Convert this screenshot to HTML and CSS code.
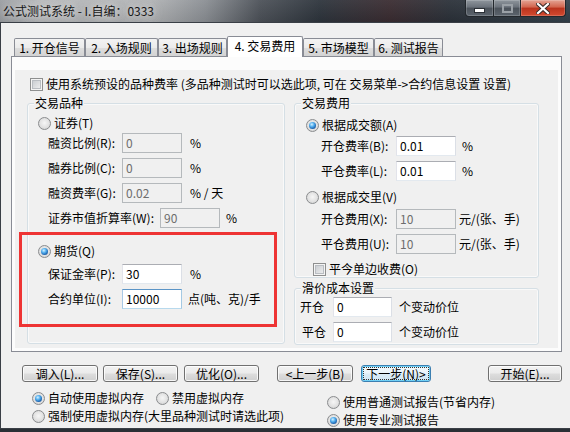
FILE: index.html
```html
<!DOCTYPE html>
<html lang="zh-CN">
<head>
<meta charset="utf-8">
<title>公式测试系统</title>
<link rel="stylesheet" href="styles.css">
</head>
<body>
<div class="window">
  <div class="titlebar">
    <div class="title">公式测试系统 - I.自编：0333</div>
    <div class="caption-btns">
      <div class="cbtn cmin"><svg width="11" height="5" viewBox="0 0 11 5"><rect x="0.5" y="0.5" width="10" height="4" fill="#fff" stroke="#2a2f35"/></svg></div>
      <div class="cbtn cmax"><svg width="11" height="9" viewBox="0 0 11 9"><rect x="1" y="1" width="9" height="7" fill="none" stroke="#9aa0a6" stroke-width="2"/></svg></div>
      <div class="cbtn cclose"><svg width="14" height="11" viewBox="0 0 14 11"><path d="M2 1 L12 10 M12 1 L2 10" stroke="#3a2a28" stroke-width="4.2" stroke-linecap="square"/><path d="M2 1 L12 10 M12 1 L2 10" stroke="#fff" stroke-width="2.2" stroke-linecap="square"/></svg></div>
    </div>
  </div>
  <div class="mid">
    <div class="frame-l"></div>
    <div class="client">
      <div class="tabstrip">
        <div class="tab t1">1. 开仓信号</div>
        <div class="tab t2">2. 入场规则</div>
        <div class="tab t3">3. 出场规则</div>
        <div class="tab t4 sel">4. 交易费用</div>
        <div class="tab t5">5. 市场模型</div>
        <div class="tab t6">6. 测试报告</div>
      </div>
      <div class="panel">
        <div class="page">
          <div class="check-row"><span class="chk"></span><span>使用系统预设的品种费率 (多品种测试时可以选此项, 可在 交易菜单-&gt;合约信息设置 设置)</span></div>
          <div class="groups">
            <div class="group g-left">
              <span class="legend">交易品种</span>
              <div class="radio-row"><span class="radio"></span>证券(T)</div>
              <div class="frow r-first"><span class="lbl">融资比例(R):</span><span class="edit dis">0</span><span class="unit">%</span></div>
              <div class="frow"><span class="lbl">融券比例(C):</span><span class="edit dis">0</span><span class="unit">%</span></div>
              <div class="frow"><span class="lbl">融资费率(G):</span><span class="edit dis">0.02</span><span class="unit">% / 天</span></div>
              <div class="frow"><span class="lbl lbl-wide">证券市值折算率(W):</span><span class="edit dis">90</span><span class="unit unit-s">%</span></div>
              <div class="radio-row r-fut"><span class="radio on"></span>期货(Q)</div>
              <div class="frow"><span class="lbl">保证金率(P):</span><span class="edit">30</span><span class="unit">%</span></div>
              <div class="frow"><span class="lbl">合约单位(I):</span><span class="edit focus">10000</span><span class="unit unit-s">点(吨、克)/手</span></div>
              <div class="redbox"></div>
            </div>
            <div class="col-right">
              <div class="group g-fee">
                <span class="legend">交易费用</span>
                <div class="radio-row"><span class="radio on"></span>根据成交额(A)</div>
                <div class="frow r-first"><span class="lbl">开仓费率(B):</span><span class="edit">0.01</span><span class="unit">%</span></div>
                <div class="frow"><span class="lbl">平仓费率(L):</span><span class="edit">0.01</span><span class="unit">%</span></div>
                <div class="radio-row r-vol"><span class="radio"></span>根据成交里(V)</div>
                <div class="frow r-first2"><span class="lbl">开仓费用(X):</span><span class="edit dis">10</span><span class="unit unit-y">元/(张、手)</span></div>
                <div class="frow"><span class="lbl">平仓费用(U):</span><span class="edit dis">10</span><span class="unit unit-y">元/(张、手)</span></div>
                <div class="check-row2"><span class="chk"></span><span>平今单边收费(O)</span></div>
              </div>
              <div class="group g-slip">
                <span class="legend">滑价成本设置</span>
                <div class="frow"><span class="lbl">开仓</span><span class="edit">0</span><span class="unit">个变动价位</span></div>
                <div class="frow"><span class="lbl lbl-in">平仓</span><span class="edit">0</span><span class="unit">个变动价位</span></div>
              </div>
            </div>
          </div>
        </div>
      </div>
      <div class="btnrow">
        <div class="btn b1">调入(L)...</div>
        <div class="btn b2">保存(S)...</div>
        <div class="btn b3">优化(O)...</div>
        <div class="btn b4">&lt;上一步(B)</div>
        <div class="btn b5 def"><span class="focusrect">下一步(N)&gt;</span></div>
        <div class="btn b6">开始(E)...</div>
      </div>
      <div class="opts">
        <div class="opts-l">
          <div class="orow"><span class="radio on"></span>自动使用虚拟内存<span class="radio r-gap"></span>禁用虚拟内存</div>
          <div class="orow"><span class="radio"></span>强制使用虚拟内存(大里品种测试时请选此项)</div>
        </div>
        <div class="opts-r">
          <div class="orow"><span class="radio"></span>使用普通测试报告(节省内存)</div>
          <div class="orow"><span class="radio on"></span>使用专业测试报告</div>
        </div>
      </div>
    </div>
    <div class="frame-r"></div>
  </div>
  <div class="frame-b"></div>
</div>
</body>
</html>
```
FILE: styles.css
```css
* { box-sizing: border-box; }
html, body { margin: 0; padding: 0; }
body {
  width: 570px; height: 432px; overflow: hidden;
  font-family: "Noto Sans CJK SC", "Noto Sans", sans-serif;
  font-size: 12px; line-height: 14px; color: #000;
  background: #2a3038;
}
.window { display: flex; flex-direction: column; width: 570px; height: 432px; }

/* title bar */
.titlebar {
  height: 22px; display: flex; justify-content: space-between; align-items: flex-start;
  background:
    linear-gradient(rgba(255,255,255,0.06), rgba(0,0,0,0.08)),
    linear-gradient(90deg, #9a9da1 0px, #b6b8ba 40px, #b1b3b5 150px, #8b8f94 205px, #4c5158 260px, #2d343c 320px, #3a2c31 390px, #2b3139 450px, #33404a 570px);
}
.title {
  padding-left: 3px; margin-top: 3px; line-height: 15px; font-size: 12px; color: #161616;
  text-shadow: 0 0 6px rgba(235,235,235,0.9), 0 0 12px rgba(220,220,220,0.7);
  white-space: nowrap;
}
.caption-btns { display: flex; margin-right: 4px; }
.cbtn {
  height: 17px; border: 1px solid #22272c; border-top: none;
  display: flex; align-items: center; justify-content: center;
  background: linear-gradient(#8f969d, #6a717a 45%, #4b525a 50%, #5c646d);
  box-shadow: inset 0 0 0 1px rgba(255,255,255,0.18);
}
.cmin { width: 29px; border-radius: 0 0 0 4px; padding-top: 5px; }
.cmax { width: 27px; border-left: none; }
.cclose {
  width: 45px; border-left: none; border-radius: 0 0 4px 0;
  background: linear-gradient(#e4a494, #d2644d 45%, #b9331d 50%, #d24a30);
}

/* frame */
.mid { flex: 1; display: flex; }
.frame-l { width: 3px; background: linear-gradient(#8e9297, #6c7178 60%, #3a3f45); }
.frame-r { width: 4px; background: #2f363e; }
.frame-b { height: 3px; background: #2a2f35; }
.client {
  flex: 1; border: 1px solid #3a3f46; background: #f0f0f0;
  padding: 13px 10px 0 10px; display: flex; flex-direction: column;
}

/* tabs */
.tabstrip { display: flex; align-items: flex-end; height: 20px; padding-left: 3px; position: relative; z-index: 1; }
.tab {
  height: 18px; border: 1px solid #898c95; border-bottom: none; border-radius: 2px 2px 0 0;
  background: linear-gradient(#f3f3f3, #ebebeb 50%, #dedede 50%, #d3d3d3);
  display: flex; align-items: center; justify-content: center; white-space: nowrap;
  padding-top: 1px;
}
.tab.sel { height: 21px; margin-bottom: -1px; background: #fff; padding-top: 0; padding-bottom: 2px; }
.t1 { width: 71px; }
.t2 { width: 73px; }
.t3 { width: 69px; }
.t4 { width: 76px; }
.t5 { width: 71px; }
.t6 { width: 69px; }

.panel { height: 296px; border: 1px solid #898c95; background: #fcfcfc; padding: 13px 3px 3px 3px; }
.page { height: 100%; background: #f0f0f0; padding-top: 7px; }

.check-row { display: flex; align-items: center; height: 14px; margin-left: 15px; white-space: nowrap; }
.chk {
  width: 13px; height: 13px; flex: none; margin-right: 3px;
  border: 1px solid #8e8f8f;
  background: linear-gradient(135deg, #c2c6cb, #f4f4f4);
  box-shadow: inset 0 0 0 1px #f4f4f4, inset 0 0 0 2px #b9bdc2;
}

.groups { display: flex; gap: 9px; margin-top: 12px; margin-left: 12px; }
.group { position: relative; border: 1px solid #d5dfe5; border-radius: 3px; box-shadow: inset 0 0 0 1px rgba(255,255,255,0.6); }
.legend { position: absolute; top: -8px; left: 6px; padding: 0 1px; background: #f0f0f0; line-height: 14px; white-space: nowrap; }
.g-left { width: 258px; height: 241px; padding: 11px 0 0 10px; }
.col-right { width: 245px; display: flex; flex-direction: column; }
.g-fee { height: 175px; padding: 13px 0 0 11px; }
.g-slip { height: 57px; margin-top: 10px; padding: 8px 0 0 5px; }

.radio-row { display: flex; align-items: center; height: 16px; white-space: nowrap; }
.radio {
  width: 13px; height: 13px; flex: none; margin-right: 3px; border-radius: 50%; position: relative;
  border: 1px solid #8a8c8e;
  background: radial-gradient(circle at 50% 45%, #f6f6f6 0, #e2e2e2 55%, #c9cacb 100%);
}
.radio.on::after {
  content: ""; position: absolute; left: 2px; top: 2px; width: 7px; height: 7px; border-radius: 50%;
  background: radial-gradient(circle at 40% 35%, #d6f1ff 0, #56b1ef 35%, #1d64b0 70%, #123d78 100%);
}

.frow { display: flex; align-items: center; height: 20px; margin-top: 5px; white-space: nowrap; }
.g-left .frow { padding-left: 10px; }
.g-left .r-first { margin-top: 2px; }
.g-left .r-fut { margin-top: 15px; }
.lbl { width: 74px; flex: none; }
.lbl-wide { width: 112px; }
.edit {
  width: 60px; height: 20px; flex: none; line-height: 14px; padding: 2px 0 0 3px;
  background: #fff; border: 1px solid; border-color: #abadb3 #dbdfe6 #e3e9ef #e2e3ea;
}
.edit.dis { background: #f0f0f0; border-color: #b5b9bc; color: #6d6d6d; }
.edit.focus { border-color: #5b95c7 #a4c9e3 #b7d9ed #a9c9e6; }
.unit { margin-left: 8px; }
.unit-s { margin-left: 6px; }

.g-fee .frow { padding-left: 15px; }
.g-fee .lbl { width: 75px; }
.g-fee .r-first { margin-top: 3px; }
.g-fee .r-vol { margin-top: 8px; }
.g-fee .r-first2 { margin-top: 4px; }
.g-fee .unit { margin-left: 6px; }
.g-fee .unit-y { margin-left: 3px; }
.check-row2 { display: flex; align-items: center; height: 14px; margin-top: 8px; padding-left: 7px; white-space: nowrap; }

.g-slip .frow:first-of-type { margin-top: 0; }
.g-slip .lbl { width: 33px; }
.lbl-in { padding-left: 2px; }
.g-slip .edit { width: 59px; }
.g-slip .unit { margin-left: 7px; }

.redbox {
  position: absolute; left: -9px; top: 128px; width: 258px; height: 95px;
  border: 3px solid #ee3434; pointer-events: none;
}

/* bottom buttons */
.btnrow { display: flex; margin-top: 13px; padding-left: 11px; }
.btn {
  height: 17px; border: 1px solid #707070; border-radius: 3px; white-space: nowrap;
  display: flex; align-items: center; justify-content: center;
  background: linear-gradient(#f2f2f2, #ebebeb 48%, #dddddd 52%, #cfcfcf);
  box-shadow: inset 0 0 0 1px rgba(255,255,255,0.8);
}
.b1 { width: 76px; }
.b2 { width: 75px; margin-left: 5px; }
.b3 { width: 75px; margin-left: 6px; }
.b4 { width: 76px; margin-left: 18px; }
.b5 { width: 70px; margin-left: 8px; }
.b6 { width: 74px; margin-left: 57px; }
.btn.def {
  border-color: #3c7fb1;
  background: linear-gradient(#f4fafd, #eaf4fa 48%, #dbecf6 52%, #cfe5f3);
  box-shadow: inset 0 0 0 1px #6fd0f6;
}
.focusrect { border: 1px dotted #333; padding: 0 2px; line-height: 11px; }

/* options */
.opts { display: flex; margin-top: 8px; }
.opts-l { width: 316px; padding-left: 21px; }
.opts-r { margin-top: 4px; }
.orow { display: flex; align-items: center; height: 16px; white-space: nowrap; }
.orow + .orow { margin-top: 2px; }
.r-gap { margin-left: 12px; }
```
